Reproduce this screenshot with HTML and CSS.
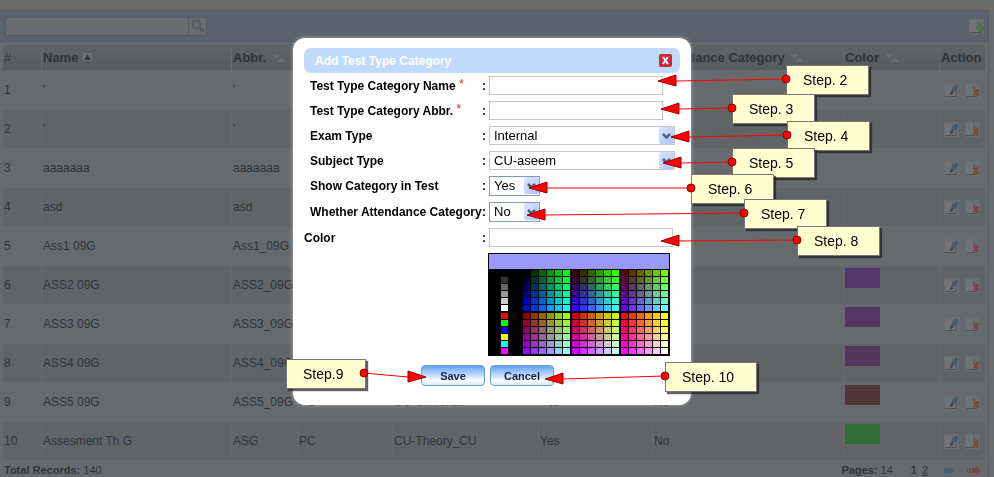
FILE: index.html
```html
<!DOCTYPE html>
<html lang="en">
<head>
<meta charset="utf-8">
<title>Test Type Category</title>
<link rel="stylesheet" href="styles.css">
</head>
<body>
<svg class="defs" aria-hidden="true">
  <symbol id="page" viewBox="0 0 15 15"><path d="M0 0h15v15H0z" fill="#6a6e71"/><path d="M1 2h8l3 3v8H1z" fill="#707477"/><path d="M12 6v7.500H1" fill="none" stroke="#505457"/><path d="M8 2v4h4z" fill="#5b5f63"/></symbol>
  <symbol id="edit" viewBox="0 0 15 15"><use href="#page"/><path d="M13.500 2.500 8 9" stroke="#3b5264" stroke-width="3"/><path d="M13.500 2.500 9 8" stroke="#4f6e82" stroke-width="1"/><path d="M7 8.500l-1.500 4 4-2z" fill="#393f46"/></symbol>
  <symbol id="del" viewBox="0 0 15 15"><use href="#page"/><path d="M8.500 6.500l5 6M13.500 6.500l-5 6" stroke="#774843" stroke-width="2.200"/></symbol>
  <symbol id="add" viewBox="0 0 15 15"><use href="#page"/><path d="M11 5v8M7 9h8" stroke="#426c3b" stroke-width="3"/><path d="M11 6v6M8 9h6" stroke="#578451" stroke-width="1"/></symbol>
  <symbol id="sort" viewBox="0 0 15 9"><path d="M0 0h9L4.500 5zM5 8h9L9.500 3z" fill="#686c6f"/></symbol>
  <symbol id="chev" viewBox="0 0 15 17"><path d="M4 7l3.500 3.500L11 7" fill="none" stroke="#4d6185" stroke-width="2.500"/></symbol>
</svg>

<main class="page">
  <div class="strip"></div>
  <div class="content">
    <div class="toolbar">
      <form class="search">
        <input class="search-box" type="text" aria-label="Search">
        <button class="search-btn" type="button" aria-label="Search"><svg width="14" height="14" viewBox="0 0 14 14"><circle cx="5.500" cy="5.500" r="4" fill="none" stroke="#575b5e" stroke-width="2"/><path d="M8.500 8.500l4 4" stroke="#575b5e" stroke-width="3"/></svg></button>
      </form>
      <button class="icon-btn" type="button" aria-label="Add"><svg width="15" height="15"><use href="#add"/></svg></button>
    </div>
    <table class="records">
      <colgroup><col class="c-num"><col><col class="c-abbr"><col class="c-exam"><col class="c-subject"><col class="c-show"><col class="c-attend"><col class="c-color"><col class="c-action"></colgroup>
      <thead>
        <tr><th class="plain">#</th><th>Name <svg class="sorted" width="9" height="8" viewBox="0 0 9 8"><path d="M0 0h9v8H0z" fill="#6e7275"/><path d="M1 7h7L4.500 1z" fill="#35393c"/></svg></th><th>Abbr. <svg class="sort" width="15" height="9"><use href="#sort"/></svg></th><th></th><th></th><th></th><th>Attendance Category <svg class="sort" width="15" height="9"><use href="#sort"/></svg></th><th>Color <svg class="sort" width="15" height="9"><use href="#sort"/></svg></th><th>Action</th></tr>
      </thead>
      <tbody id="rows"></tbody>
    </table>
    <footer class="foot">
      <span><b>Total Records:</b> 140</span>
      <nav class="pager">
        <span class="count"><b>Pages:</b> 14</span>
        <b class="current">1</b>
        <a href="#p2">2</a>
        <a class="next" href="#next" aria-label="Next"><svg width="10" height="9" viewBox="0 0 10 9"><path d="M0 2h5V0l5 4.500L5 9V7H0z" fill="#425f70"/></svg></a>
        <a class="last" href="#last" aria-label="Last"><svg width="14" height="9" viewBox="0 0 14 9"><path d="M0 2h1v5H0zM2 2h2v5H2zM5 2h4V0l5 4.500L9 9V7H5z" fill="#70494a"/></svg></a>
      </nav>
    </footer>
  </div>
</main>

<div class="overlay">
  <section class="dialog" role="dialog" aria-labelledby="dlg-title">
    <header class="dlg-head">
      <h1 id="dlg-title">Add Test Type Category</h1>
      <button class="close" type="button" aria-label="Close"><svg width="13" height="13" viewBox="0 0 13 13"><path d="M4 3l5 7M9 3l-5 7" stroke="#fff" stroke-width="2"/></svg></button>
    </header>
    <form class="form">
      <div class="field"><label for="f-name">Test Type Category Name <span class="req">*</span></label><b>:</b><input id="f-name" class="text" type="text"></div>
      <div class="field"><label for="f-abbr">Test Type Category Abbr. <span class="req">*</span></label><b>:</b><input id="f-abbr" class="text" type="text"></div>
      <div class="field"><label for="f-exam">Exam Type</label><b>:</b><span class="pick wide"><select id="f-exam"><option>Internal</option></select><svg class="arrow" width="15" height="17"><use href="#chev"/></svg></span></div>
      <div class="field"><label for="f-subj">Subject Type</label><b>:</b><span class="pick wide"><select id="f-subj"><option>CU-aseem</option></select><svg class="arrow" width="15" height="17"><use href="#chev"/></svg></span></div>
      <div class="field"><label for="f-show">Show Category in Test</label><b>:</b><span class="pick small"><select id="f-show"><option>Yes</option></select><svg class="arrow" width="15" height="17"><use href="#chev"/></svg></span></div>
      <div class="field"><label for="f-att">Whether Attendance Category</label><b>:</b><span class="pick small"><select id="f-att"><option>No</option></select><svg class="arrow" width="15" height="17"><use href="#chev"/></svg></span></div>
      <div class="field outdent"><label for="f-color">Color</label><b>:</b><input id="f-color" class="text color" type="text"></div>
      <div class="palette">
        <div class="preview"></div>
        <div class="swatches">
          <div class="basic" id="basic"></div>
          <div class="cube" id="cube"></div>
        </div>
      </div>
      <div class="actions"><button type="button">Save</button><button type="button">Cancel</button></div>
    </form>
  </section>
</div>

<div class="notes">
  <div class="note n2">Step. 2</div>
  <div class="note n3">Step. 3</div>
  <div class="note n4">Step. 4</div>
  <div class="note n5">Step. 5</div>
  <div class="note n6">Step. 6</div>
  <div class="note n7">Step. 7</div>
  <div class="note n8">Step. 8</div>
  <div class="note n9">Step.9</div>
  <div class="note n10">Step. 10</div>
  <svg class="pointers" id="pointers" width="994" height="477" viewBox="0 0 994 477"></svg>
</div>
<script src="app.js"></script>
</body>
</html>
```
FILE: styles.css
```css
* { box-sizing: border-box; }

body {
  margin: 0;
  height: 100vh;
  overflow: hidden;
  background: #666a6d;
  color: #303437;
  font: 12px/16px "Liberation Sans", Arial, sans-serif;
}

button, input, select { font: inherit; margin: 0; padding: 0; }
.defs { position: absolute; width: 0; height: 0; }

/* Page behind the dialog */
.strip { height: 7px; background: #666b63; border-bottom: 1px solid #7b6c4a; }
.content { margin: 3px 5px 0 0; border-right: 1px solid #5a5e61; }

.toolbar {
  display: flex;
  justify-content: space-between;
  align-items: center;
  height: 32px;
  padding: 0 4px 0 5px;
  background: #5b636e;
  border-top: 1px solid #585e67;
  border-bottom: 1px solid #585e67;
}
.search { display: flex; }
.search-box, .search-btn { height: 19px; border: 1px solid #565b61; background: #696d70; }
.search-box { width: 184px; }
.search-btn { width: 18px; border-left: 0; display: grid; place-items: center; }
.icon-btn { border: 0; background: none; display: block; line-height: 0; }

.records {
  width: calc(100% - 4px);
  margin: 2px 2px 0 2px;
  border-spacing: 1px;
  table-layout: fixed;
}
.c-num { width: 38px; }
.c-abbr { width: 65px; }
.c-exam { width: 94px; }
.c-subject { width: 145px; }
.c-show { width: 113px; }
.c-attend { width: 190px; }
.c-color { width: 95px; }
.c-action { width: 45px; }

th {
  height: 25px;
  padding: 0 1px;
  text-align: left;
  font-size: 13px;
  white-space: nowrap;
  background: linear-gradient(#5f6366, #565a5d);
}
th.plain { font-weight: normal; }
.sort { margin: 0 0 -1px 2px; }
.sorted { margin: 0 0 1px 1px; }
td { height: 38px; padding: 0 1px; white-space: nowrap; }
tr:nth-child(even) td { background: #606467; }
.swatch-cell { vertical-align: top; padding: 2px 1px; }
.swatch { width: 35px; height: 20px; }
.action-set { display: flex; gap: 6px; padding-left: 3px; }

.foot { display: flex; justify-content: space-between; padding: 1px 7px 0 4px; font-size: 11px; }
.pager { display: flex; align-items: center; }
.pager a { color: inherit; }
.current { margin: 0 5px 0 18px; }
.next { margin-left: 16px; line-height: 0; }
.last { margin-left: 13px; line-height: 0; }

/* Dialog */
.overlay { position: fixed; inset: 0; padding: 38px 10px 0 0; }
.dialog {
  width: 398px;
  margin: 0 auto;
  padding: 10px 11px 19px;
  border-radius: 12px;
  background: #fff;
  color: #000;
  box-shadow: 0 0 4px rgba(200, 204, 208, 0.7);
}
.dlg-head {
  display: flex;
  justify-content: space-between;
  align-items: center;
  height: 25px;
  padding: 0 8px 0 11px;
  border-radius: 7px;
  background: #c0dbfa;
}
.dlg-head h1 { margin: 0; font-size: 12px; color: #fff; }
.close {
  width: 13px;
  height: 13px;
  border: 0;
  border-radius: 2px;
  background: #cc2a2f;
  line-height: 0;
}

.form { display: flex; flex-direction: column; gap: 6px; margin-top: 3px; }
.field { display: flex; align-items: center; padding-left: 6px; font-size: 12px; font-weight: bold; }
.field label { width: 172px; white-space: nowrap; }
.field b { width: 7px; }
.outdent { padding-left: 0; }
.outdent label { width: 178px; }
.req { color: #e02020; font-weight: normal; line-height: 12px; vertical-align: 2px; }
.text { width: 174px; height: 19px; border: 1px solid #c6c6c6; background: #fff; }
.color { width: 184px; }

.pick { position: relative; display: block; height: 19px; }
.pick select {
  appearance: none;
  display: block;
  width: 100%;
  height: 100%;
  padding: 0 4px;
  border: 1px solid #c6c6c6;
  border-radius: 0;
  background: #fff;
  color: #000;
  font-size: 13px;
  font-weight: normal;
}
.wide { width: 186px; }
.small { width: 51px; height: 20px; }
.small select { border-color: #7f9db9; }
.arrow {
  position: absolute;
  top: 1px;
  right: 1px;
  border-radius: 2px;
  background: linear-gradient(135deg, #dbe5fd, #adc3f7);
}

.palette { width: 182px; margin-left: 184px; border: 1px solid #000; background: #000; }
.preview { height: 15px; background: #99f; }
.swatches { display: flex; padding: 1px 0 1px 12px; }
.basic, .cube { display: grid; grid-template-rows: repeat(5, 6px) 7px; grid-auto-rows: 6px; gap: 1px; }
.basic { grid-template-columns: 7px; margin-right: 15px; }
.cube { grid-template-columns: repeat(3, 7px 7px 7px 7px 7px 8px); }
.sw { width: 7px; height: 6px; }

.actions { display: flex; gap: 5px; margin: 3px 0 0 117px; }
.actions button {
  width: 64px;
  height: 21px;
  border: 1px solid #6c9bd2;
  border-radius: 4px;
  background: linear-gradient(#62a5f6, #d8e8fd 60%, #fff 75%, #dcebfd);
  color: #13234b;
  font-size: 11px;
  font-weight: bold;
}

/* Step notes pinned over the screen */
.notes { position: absolute; top: 0; left: 0; pointer-events: none; }
.note {
  position: absolute;
  width: 83px;
  height: 30px;
  padding-left: 16px;
  border: 1px solid #77776f;
  background: #ffffd2;
  box-shadow: 2px 2px 1px rgba(30, 32, 34, 0.7);
  color: #000;
  font-size: 14px;
  line-height: 28px;
  white-space: nowrap;
}
.n2 { left: 786px; top: 65px; }
.n3 { left: 732px; top: 94px; }
.n4 { left: 787px; top: 121px; }
.n5 { left: 732px; top: 148px; }
.n6 { left: 691px; top: 174px; }
.n7 { left: 744px; top: 199px; }
.n8 { left: 797px; top: 226px; }
.n9 { left: 286px; top: 359px; width: 80px; }
.n10 { left: 665px; top: 362px; width: 92px; }
.pointers { position: absolute; top: 0; left: 0; }
```
FILE: app.js
```js
// Table rows: name, abbr, exam type, subject type, show, attendance, color
const records = [
  ["'", "'"], ["'", "'"], ["aaaaaaa", "aaaaaaa"], ["asd", "asd"],
  ["Ass1 09G", "Ass1_09G"],
  ["ASS2 09G", "ASS2_09G", "", "", "", "", "#52376d"],
  ["ASS3 09G", "ASS3_09G", "", "", "", "", "#533663"],
  ["ASS4 09G", "ASS4_09G", "", "", "", "", "#533658"],
  ["ASS5 09G", "ASS5_09G", "PC", "CU-Universal", "Yes", "No", "#533638"],
  ["Assesment Th G", "ASG", "PC", "CU-Theory_CU", "Yes", "No", "#316c38"],
];
const icon = (id, label) =>
  `<button class="icon-btn" type="button" aria-label="${label}"><svg width="15" height="15"><use href="#${id}"/></svg></button>`;
document.getElementById("rows").innerHTML = records.map((r, i) => {
  const cells = [i + 1];
  for (let c = 0; c < 6; c++) cells.push(r[c] || "");
  const swatch = r[6] ? `<div class="swatch" style="background:${r[6]}"></div>` : "";
  return `<tr>${cells.map(c => `<td>${c}</td>`).join("")}<td class="swatch-cell">${swatch}</td>` +
    `<td><div class="action-set">${icon("edit", "Edit")}${icon("del", "Delete")}</div></td></tr>`;
}).join("");

// Palette: a column of basic colors beside the 216-color cube
const sw = c => `<span class="sw" style="background:${c}"></span>`;
const hex = ["0", "3", "6", "9", "c", "f"];
document.getElementById("basic").innerHTML =
  ["#000", "#333", "#666", "#999", "#ccc", "#fff", "#f00", "#0f0", "#00f", "#ff0", "#0ff", "#f0f"].map(sw).join("");
let cube = "";
for (let row = 0; row < 12; row++)
  for (let col = 0; col < 18; col++)
    cube += sw("#" + hex[Math.floor(col / 6) + (row > 5 ? 3 : 0)] + hex[col % 6] + hex[row % 6]);
document.getElementById("cube").innerHTML = cube;

// Pointers: dot x, y, then tip x, y
const lines = [
  [786, 79, 658, 81], [732, 108, 661, 109], [787, 135, 671, 137], [732, 162, 663, 163],
  [691, 188, 529, 188], [744, 213, 527, 215], [797, 240, 661, 241], [364, 373, 426, 377], [665, 376, 545, 379],
];
document.getElementById("pointers").innerHTML = lines.map(([x, y, tx, ty]) => {
  const b = tx + (x > tx ? 18 : -18);
  return `<path d="M${x} ${y}L${b} ${ty}" stroke="#f00"/>` +
    `<path d="M${tx} ${ty}L${b} ${ty - 6}V${ty + 5}z" fill="#f00" stroke="#900"/>` +
    `<circle cx="${x}" cy="${y}" r="4" fill="#f00" stroke="#900"/>`;
}).join("");
```
